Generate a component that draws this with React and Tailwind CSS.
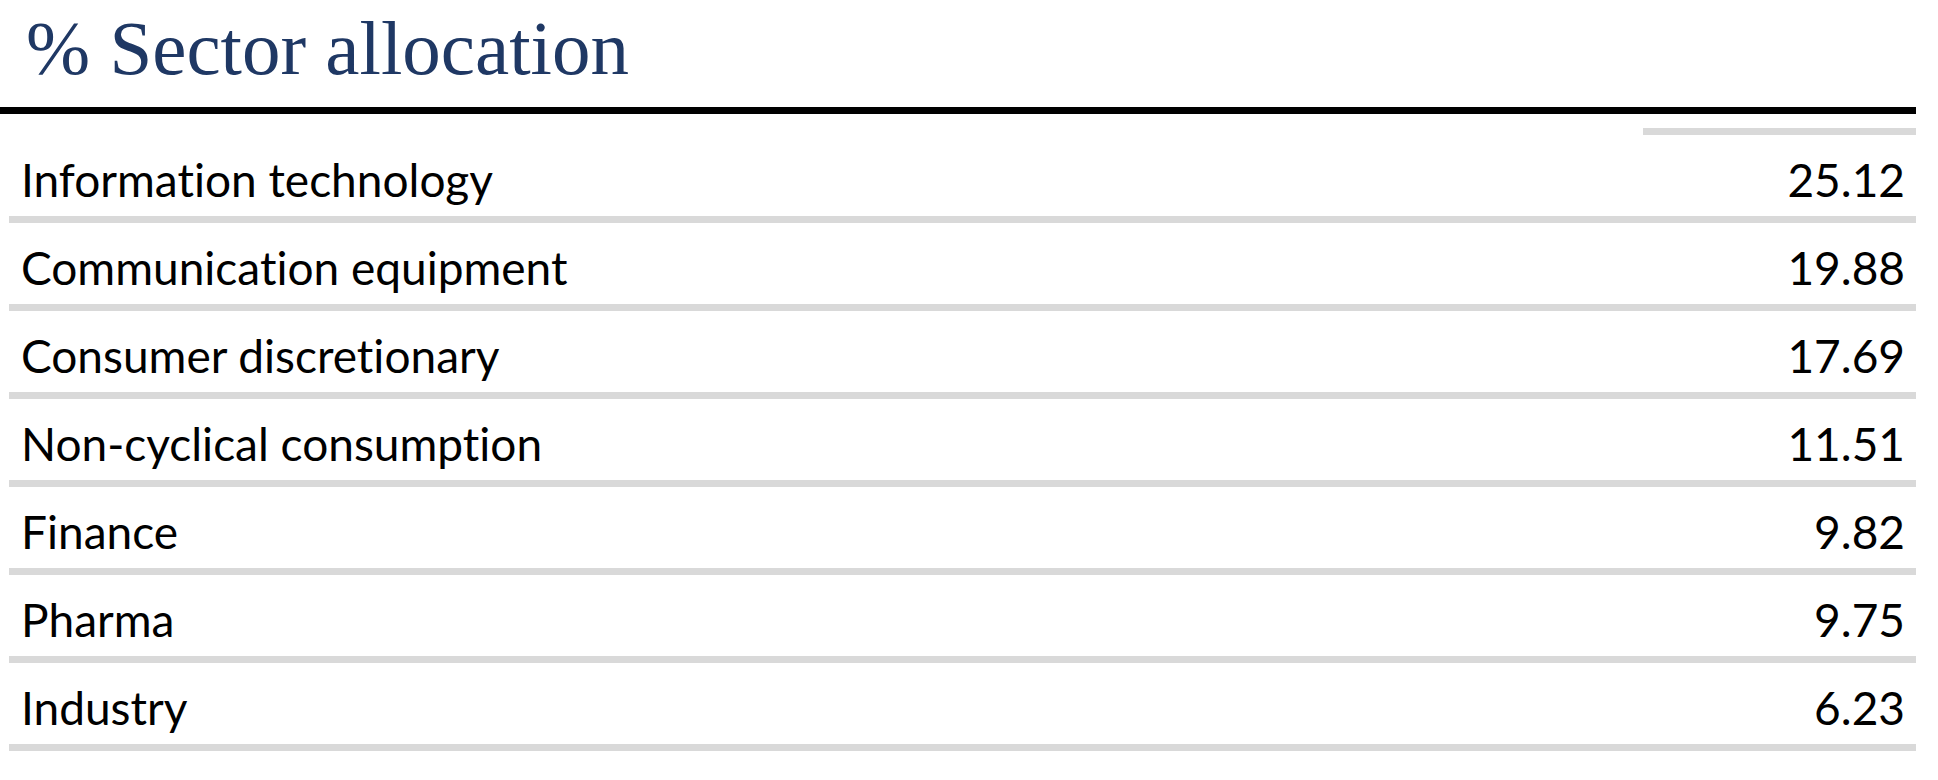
const rows = [
  ["Information technology", "25.12"],
  ["Communication equipment", "19.88"],
  ["Consumer discretionary", "17.69"],
  ["Non-cyclical consumption", "11.51"],
  ["Finance", "9.82"],
  ["Pharma", "9.75"],
  ["Industry", "6.23"],
];

export default function App() {
  return (
    <div className="min-h-screen w-[1938px] bg-white">
      <div className="w-[1916px]">
        {/* Title */}
        <div className="h-[107px] pl-[26px] pt-[10px]">
          <h1 className="font-['Liberation_Serif',serif] text-[77px] leading-none text-[#1f3864]">
            % Sector allocation
          </h1>
        </div>
        <div className="h-[7px] bg-black" />

        {/* Table */}
        <div className="ml-[9px] mt-[14px] font-['Lato',sans-serif] text-[46px] leading-none text-black [font-variant-ligatures:none]">
          <div className="grid grid-cols-[1fr_273px]">
            <div />
            <div className="h-[7px] bg-[#d9d9d9]" />
          </div>
          {rows.map(([label, value]) => (
            <div
              key={label}
              className="grid h-[88px] grid-cols-[1fr_273px] border-b-[7px] border-[#d9d9d9]"
            >
              <div className="pl-[12px] pt-[22px]">{label}</div>
              <div className="pr-[11px] pt-[22px] text-right">{value}</div>
            </div>
          ))}
        </div>
      </div>
    </div>
  );
}
